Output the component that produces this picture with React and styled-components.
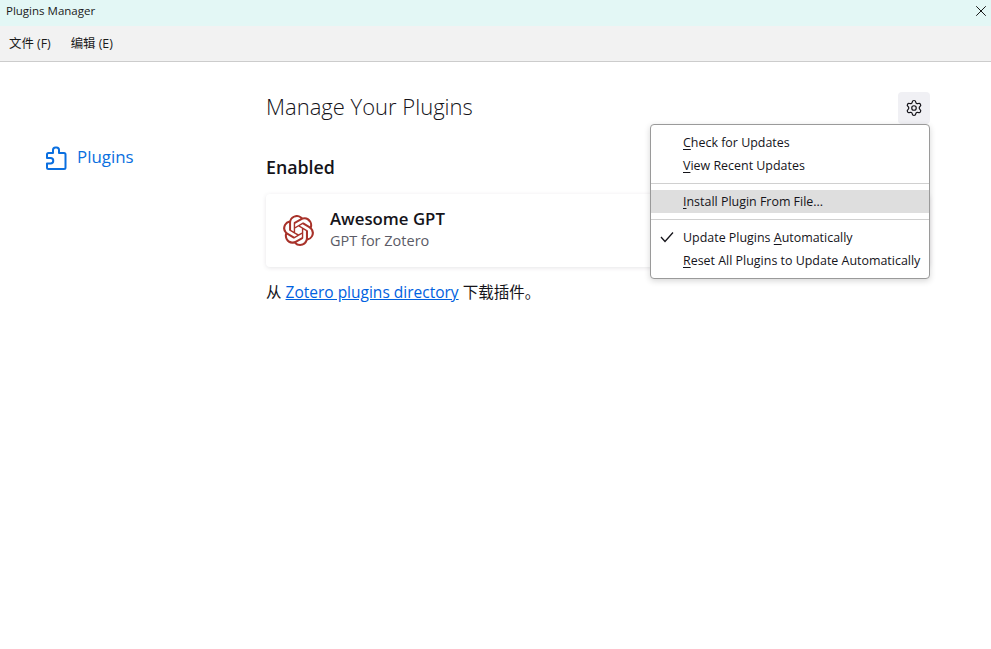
import React from "react";
import styled, { createGlobalStyle } from "styled-components";
import { Settings, X } from "lucide-react";
import { SiOpenai } from "react-icons/si";

const Global = createGlobalStyle`
  html, body { margin: 0; padding: 0; background: #fff; }
  body { font-family: "Open Sans", "Noto Sans CJK SC", sans-serif; color: #15141a; }
  * { box-sizing: border-box; }
`;

const Window = styled.div`
  width: 991px;
  height: 649px;
  display: flex;
  flex-direction: column;
  overflow: hidden;
`;

const TitleBar = styled.div`
  height: 26px;
  flex: none;
  background: #e3f7f5;
  display: flex;
  align-items: center;
  justify-content: space-between;
  padding: 0 1px 5px 6px;
  font-size: 11.5px;
  color: #1a1a1a;
`;

const CloseButton = styled.button`
  border: 0;
  background: none;
  padding: 0;
  width: 18px;
  height: 18px;
  display: flex;
  color: #111;
`;

const MenuBar = styled.div`
  height: 36px;
  flex: none;
  background: #f2f2f2;
  border-bottom: 1px solid #cccccc;
  display: flex;
  align-items: center;
  gap: 20px;
  padding: 0 9px 1px;
  font-size: 12.4px;
  color: #1a1a1a;
`;

const Body = styled.div`
  flex: 1;
  display: flex;
`;

const Sidebar = styled.nav`
  width: 266px;
  flex: none;
  padding: 82px 0 0 45px;
`;

const NavItem = styled.div`
  display: flex;
  align-items: center;
  gap: 10px;
  color: #0a6fe0;
  font-size: 16.9px;
  line-height: 24px;
  height: 26px;
`;

const Main = styled.main`
  position: relative;
  width: 664px;
  padding-top: 30px;
`;

const Header = styled.div`
  display: flex;
  align-items: center;
  justify-content: space-between;
  height: 32px;
`;

const Title = styled.h1`
  margin: -5px 0 0;
  font-size: 22px;
  font-weight: 300;
  color: #15141a;
`;

const GearButton = styled.button`
  width: 32px;
  height: 32px;
  border: 0;
  border-radius: 4px;
  background: #f0f0f4;
  color: #15141a;
  padding: 0;
  display: flex;
  align-items: center;
  justify-content: center;
`;

const SectionTitle = styled.h2`
  margin: 31px 0 0;
  font-size: 17.8px;
  line-height: 24px;
  font-weight: 600;
  color: #15141a;
`;

const Card = styled.div`
  margin-top: 15px;
  height: 73px;
  border-radius: 4px;
  background: #fff;
  box-shadow: 0 1px 4px rgba(58, 57, 68, 0.13);
  display: flex;
  align-items: center;
  gap: 16px;
  padding: 0 0 0 17px;
  color: #a8322a;
`;

const CardText = styled.div`
  display: flex;
  flex-direction: column;
  margin-top: -1px;
`;

const CardName = styled.div`
  font-size: 16.8px;
  line-height: 22px;
  font-weight: 600;
  color: #15141a;
`;

const CardDesc = styled.div`
  font-size: 14.5px;
  line-height: 22px;
  color: #5b5b66;
`;

const Footer = styled.p`
  margin: 13px 0 0;
  font-size: 15.5px;
  line-height: 24px;
  color: #15141a;
`;

const Link = styled.a`
  color: #0061e0;
  text-decoration: underline;
`;

const Popup = styled.div`
  position: absolute;
  top: 62px;
  right: 0;
  width: 280px;
  height: 155px;
  background: #fff;
  border: 1px solid #9a9a9a;
  border-radius: 4px;
  box-shadow: 0 2px 6px rgba(0, 0, 0, 0.16);
  padding: 6px 0;
  font-size: 12.45px;
  color: #15141a;
`;

const PopupItem = styled.div`
  position: relative;
  height: 23px;
  line-height: 23px;
  padding-left: 32px;
  background: ${(p) => (p.$active ? "#dedede" : "transparent")};
  white-space: nowrap;
  u { text-underline-offset: 2px; }
`;

const PopupDivider = styled.div`
  height: 1px;
  background: #d0d0d0;
  margin: 6px 0;
`;

const Check = styled.svg`
  position: absolute;
  left: 9px;
  top: 5px;
`;

const PuzzleIcon = () => (
  <svg width="22" height="25" viewBox="0 0 22 25" fill="none" stroke="currentColor" strokeWidth="2" strokeLinejoin="round">
    <path d="M2 9.5A1.5 1.5 0 0 1 3.5 8H8V5a2.5 2.5 0 0 1 2.5-2.5h1A2.5 2.5 0 0 1 14 5v3h5a1.5 1.5 0 0 1 1.5 1.5v13A1.5 1.5 0 0 1 19 24H3.5A1.5 1.5 0 0 1 2 22.5V18.5h3.5a2.5 2.5 0 0 0 0-5.5H2z" />
  </svg>
);

export default function App() {
  return (
    <Window>
      <Global />
      <TitleBar>
        Plugins Manager
        <CloseButton>
          <X size={18} strokeWidth={1.3} />
        </CloseButton>
      </TitleBar>
      <MenuBar>
        <span>文件 (F)</span>
        <span>编辑 (E)</span>
      </MenuBar>
      <Body>
        <Sidebar>
          <NavItem>
            <PuzzleIcon />
            <span>Plugins</span>
          </NavItem>
        </Sidebar>
        <Main>
          <Header>
            <Title>Manage Your Plugins</Title>
            <GearButton>
              <Settings size={18} strokeWidth={1.6} />
            </GearButton>
          </Header>
          <SectionTitle>Enabled</SectionTitle>
          <Card>
            <SiOpenai size={31} />
            <CardText>
              <CardName>Awesome GPT</CardName>
              <CardDesc>GPT for Zotero</CardDesc>
            </CardText>
          </Card>
          <Footer>
            从 <Link>Zotero plugins directory</Link> 下载插件。
          </Footer>
          <Popup>
            <PopupItem><u>C</u>heck for Updates</PopupItem>
            <PopupItem><u>V</u>iew Recent Updates</PopupItem>
            <PopupDivider />
            <PopupItem $active><u>I</u>nstall Plugin From File...</PopupItem>
            <PopupDivider />
            <PopupItem>
              <Check width="14" height="12" viewBox="0 0 14 12" fill="none" stroke="#15141a" strokeWidth="1.3">
                <path d="M1 6l4 4.5L13 1.5" />
              </Check>
              Update Plugins <u>A</u>utomatically
            </PopupItem>
            <PopupItem><u>R</u>eset All Plugins to Update Automatically</PopupItem>
          </Popup>
        </Main>
      </Body>
    </Window>
  );
}
